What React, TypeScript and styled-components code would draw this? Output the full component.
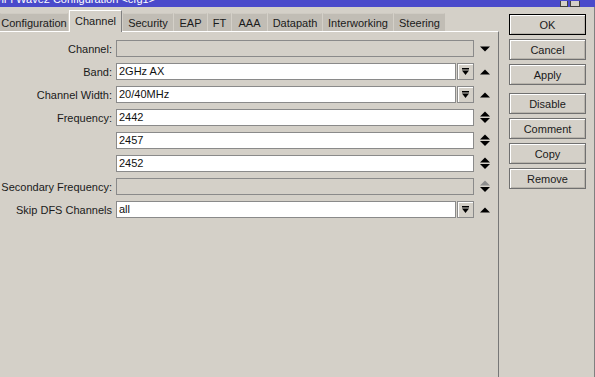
import React from "react";
import styled, { createGlobalStyle } from "styled-components";

const Global = createGlobalStyle`
  html, body { margin: 0; padding: 0; background: #d4d0c8; }
  body { font-family: "Liberation Sans", Arial, sans-serif; font-size: 11px; color: #111; }
`;

const Window = styled.div`
  width: 595px;
  height: 377px;
  background: #d4d0c8;
  display: flex;
  flex-direction: column;
  overflow: hidden;
`;

const TitleBar = styled.div`
  height: 7px;
  background: #4a4acb;
  display: flex;
  align-items: flex-end;
  overflow: hidden;
  padding-right: 15px;
`;

const TitleText = styled.div`
  flex: 1;
  color: #fff;
  font-size: 11px;
  line-height: 11px;
  margin-top: -6px;
  margin-left: -9px;
  white-space: nowrap;
  align-self: flex-start;
`;

const WinCtl = styled.div<{ w: number }>`
  width: ${(p) => p.w}px;
  height: 6px;
  box-sizing: border-box;
  border: 1px solid #404040;
  border-top: none;
  background: #d4d0c8;
  margin-left: 2px;
`;

const Body = styled.div`
  flex: 1;
  display: flex;
`;

const Main = styled.div`
  width: 499px;
  display: flex;
  flex-direction: column;
`;

const TabBar = styled.div`
  height: 24px;
  display: flex;
  align-items: flex-end;
  gap: 1px;
  position: relative;
  z-index: 1;
`;

const Tab = styled.div<{ w: number; active?: boolean }>`
  width: ${(p) => p.w}px;
  box-sizing: border-box;
  height: ${(p) => (p.active ? 22 : 18)}px;
  margin-bottom: ${(p) => (p.active ? -1 : 0)}px;
  display: flex;
  align-items: center;
  justify-content: center;
  padding-bottom: ${(p) => (p.active ? 2 : 0)}px;
  background: ${(p) => (p.active ? "#d4d0c8" : "#c1bdb5")};
  border-top: 1px solid ${(p) => (p.active ? "#ffffff" : "#cfcbc3")};
  border-left: 1px solid ${(p) => (p.active ? "#ffffff" : "transparent")};
  border-right: 1px solid ${(p) => (p.active ? "#808080" : "transparent")};
  color: #1a1a1a;
  white-space: nowrap;
`;

const Panel = styled.div`
  flex: 1;
  border-top: 1px solid #ffffff;
  border-right: 1px solid #777;
  padding-top: 8px;
  display: flex;
  flex-direction: column;
  gap: 6px;
`;

const Row = styled.div`
  display: grid;
  grid-template-columns: 116px 358px 22px;
  height: 17px;
  align-items: center;
`;

const Label = styled.div`
  text-align: right;
  padding-right: 4px;
  white-space: nowrap;
  color: #1a1a1a;
`;

const FieldWrap = styled.div`
  display: flex;
  gap: 1px;
  height: 17px;
`;

const Field = styled.div<{ disabled?: boolean }>`
  flex: 1;
  box-sizing: border-box;
  height: 17px;
  border: 1px solid #8a8a8a;
  background: ${(p) => (p.disabled ? "#d4d0c8" : "#ffffff")};
  padding-left: 2px;
  line-height: 15px;
  color: #111;
`;

const DropBtn = styled.div`
  width: 17px;
  height: 17px;
  box-sizing: border-box;
  border: 1px solid #8a8a8a;
  box-shadow: inset 1px 1px #fff;
  background: #d4d0c8;
  display: flex;
  align-items: center;
  justify-content: center;
`;

const ArrowCell = styled.div`
  display: flex;
  align-items: center;
  justify-content: center;
  height: 17px;
`;

const Side = styled.div`
  flex: 1;
  border-right: 1px solid #808080;
  padding: 7px 0 0 10px;
  display: flex;
  flex-direction: column;
`;

const Btn = styled.div<{ primary?: boolean; gapTop?: number }>`
  width: 77px;
  height: 21px;
  box-sizing: border-box;
  margin-top: ${(p) => p.gapTop ?? 4}px;
  border: 1px solid ${(p) => (p.primary ? "#000" : "#707070")};
  box-shadow: inset 1px 1px #fff, inset -1px -1px #b8b4ac;
  background: #d4d0c8;
  display: flex;
  align-items: center;
  justify-content: center;
  color: #1a1a1a;
`;

type ArrowKind = "down" | "up" | "updown" | "updownDim";

const Arrow = ({ kind }: { kind: ArrowKind }) => {
  if (kind === "down")
    return (
      <svg width="10" height="6" viewBox="0 0 10 6">
        <polygon points="0,0.5 10,0.5 5,5.5" fill="#000" />
      </svg>
    );
  if (kind === "up")
    return (
      <svg width="10" height="6" viewBox="0 0 10 6">
        <polygon points="0,5.5 10,5.5 5,0.5" fill="#000" />
      </svg>
    );
  return (
    <svg width="10" height="13" viewBox="0 0 10 13">
      <polygon points="0,5.5 10,5.5 5,0.5" fill={kind === "updownDim" ? "#8c8c8c" : "#000"} />
      <polygon points="0,7 10,7 5,12" fill="#000" />
    </svg>
  );
};

const DropIcon = () => (
  <svg width="9" height="9" viewBox="0 0 9 9">
    <rect x="1" y="1" width="7" height="1.5" fill="#000" />
    <polygon points="1,3.5 8,3.5 4.5,8" fill="#000" />
  </svg>
);

type RowDef = {
  label: string;
  value: string;
  disabled?: boolean;
  drop?: boolean;
  arrow: ArrowKind;
};

const rows: RowDef[] = [
  { label: "Channel:", value: "", disabled: true, arrow: "down" },
  { label: "Band:", value: "2GHz AX", drop: true, arrow: "up" },
  { label: "Channel Width:", value: "20/40MHz", drop: true, arrow: "up" },
  { label: "Frequency:", value: "2442", arrow: "updown" },
  { label: "", value: "2457", arrow: "updown" },
  { label: "", value: "2452", arrow: "updown" },
  { label: "Secondary Frequency:", value: "", disabled: true, arrow: "updownDim" },
  { label: "Skip DFS Channels", value: "all", drop: true, arrow: "up" },
];

const tabs: { name: string; w: number; active?: boolean }[] = [
  { name: "Configuration", w: 68 },
  { name: "Channel", w: 53, active: true },
  { name: "Security", w: 50 },
  { name: "EAP", w: 33 },
  { name: "FT", w: 23 },
  { name: "AAA", w: 35 },
  { name: "Datapath", w: 54 },
  { name: "Interworking", w: 70 },
  { name: "Steering", w: 51 },
];

const buttons: { name: string; primary?: boolean; gapTop?: number }[] = [
  { name: "OK", primary: true, gapTop: 0 },
  { name: "Cancel" },
  { name: "Apply" },
  { name: "Disable", gapTop: 8 },
  { name: "Comment" },
  { name: "Copy" },
  { name: "Remove" },
];

export default function App() {
  return (
    <>
      <Global />
      <Window>
        <TitleBar>
          <TitleText>WiFi Wave2 Configuration &lt;cfg1&gt;</TitleText>
          <WinCtl w={8} />
          <WinCtl w={10} />
        </TitleBar>
        <Body>
          <Main>
            <TabBar>
              {tabs.map((t) => (
                <Tab key={t.name} w={t.w} active={t.active}>
                  {t.name}
                </Tab>
              ))}
            </TabBar>
            <Panel>
              {rows.map((r, i) => (
                <Row key={i}>
                  <Label>{r.label}</Label>
                  <FieldWrap>
                    <Field disabled={r.disabled}>{r.value}</Field>
                    {r.drop && (
                      <DropBtn>
                        <DropIcon />
                      </DropBtn>
                    )}
                  </FieldWrap>
                  <ArrowCell>
                    <Arrow kind={r.arrow} />
                  </ArrowCell>
                </Row>
              ))}
            </Panel>
          </Main>
          <Side>
            {buttons.map((b) => (
              <Btn key={b.name} primary={b.primary} gapTop={b.gapTop}>
                {b.name}
              </Btn>
            ))}
          </Side>
        </Body>
      </Window>
    </>
  );
}
